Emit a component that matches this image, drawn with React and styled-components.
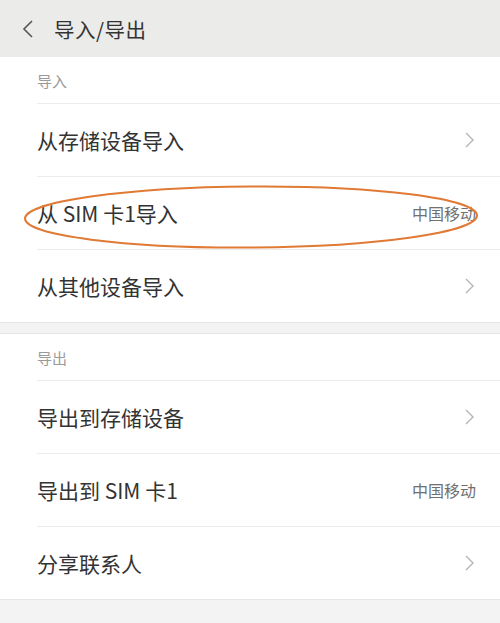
import React from "react";
import styled, { createGlobalStyle } from "styled-components";

const Global = createGlobalStyle`
  html, body { margin: 0; padding: 0; background: #f3f3f3; }
  body { font-family: "Noto Sans CJK SC", "Noto Sans", sans-serif; }
`;

const Page = styled.div`
  width: 500px;
  height: 623px;
  background: #f3f3f3;
  overflow: hidden;
`;

const Header = styled.div`
  height: 57px;
  background: #ebebe9;
  display: flex;
  align-items: center;
  padding-left: 22px;
  gap: 21px;
  box-sizing: border-box;
`;

const Title = styled.div`
  font-size: 20.5px;
  color: #333;
  letter-spacing: 0.5px;
`;

const Section = styled.div`
  background: #fff;
  padding-left: 37px;
  margin-bottom: ${p => p.$gap || 0}px;
  border-bottom: 1px solid #e6e6e6;
  border-top: ${p => (p.$top ? "1px solid #e6e6e6" : "none")};
`;

const Label = styled.div`
  height: 46px;
  display: flex;
  align-items: center;
  font-size: 15px;
  color: #9a9a9a;
  border-bottom: 1px solid #ececec;
`;

const Row = styled.div`
  position: relative;
  height: 72px;
  display: flex;
  align-items: center;
  justify-content: space-between;
  padding-right: 26px;
  border-bottom: ${p => (p.$last ? "none" : "1px solid #ececec")};
`;

const RowText = styled.div`
  font-size: 21px;
  color: #333;
`;

const Side = styled.div`
  font-size: 16px;
  color: #707070;
  margin-right: -2px;
`;

const Ellipse = styled.svg`
  position: absolute;
  left: -13px;
  top: 9px;
  width: 456px;
  height: 64px;
  pointer-events: none;
  overflow: visible;
`;

const Chevron = () => (
  <svg width="9" height="16" viewBox="0 0 9 16">
    <path d="M1 1 L8 8 L1 15" fill="none" stroke="#b5b5b5" strokeWidth="1.4" />
  </svg>
);

const Back = () => (
  <svg width="11" height="18" viewBox="0 0 11 18">
    <path d="M10 1 L2 9 L10 17" fill="none" stroke="#555" strokeWidth="1.6" />
  </svg>
);

export default function App() {
  return (
    <Page>
      <Global />
      <Header>
        <Back />
        <Title>导入/导出</Title>
      </Header>
      <Section $gap={10}>
        <Label>导入</Label>
        <Row>
          <RowText>从存储设备导入</RowText>
          <Chevron />
        </Row>
        <Row>
          <RowText>从 SIM 卡1导入</RowText>
          <Side>中国移动</Side>
          <Ellipse viewBox="0 0 456 64">
            <ellipse cx="227" cy="31" rx="226" ry="30.5" fill="none" stroke="#e07a35" strokeWidth="2" transform="rotate(-0.4 227 31)" />
          </Ellipse>
        </Row>
        <Row $last>
          <RowText>从其他设备导入</RowText>
          <Chevron />
        </Row>
      </Section>
      <Section $top>
        <Label>导出</Label>
        <Row>
          <RowText>导出到存储设备</RowText>
          <Chevron />
        </Row>
        <Row>
          <RowText>导出到 SIM 卡1</RowText>
          <Side>中国移动</Side>
        </Row>
        <Row $last>
          <RowText>分享联系人</RowText>
          <Chevron />
        </Row>
      </Section>
    </Page>
  );
}
